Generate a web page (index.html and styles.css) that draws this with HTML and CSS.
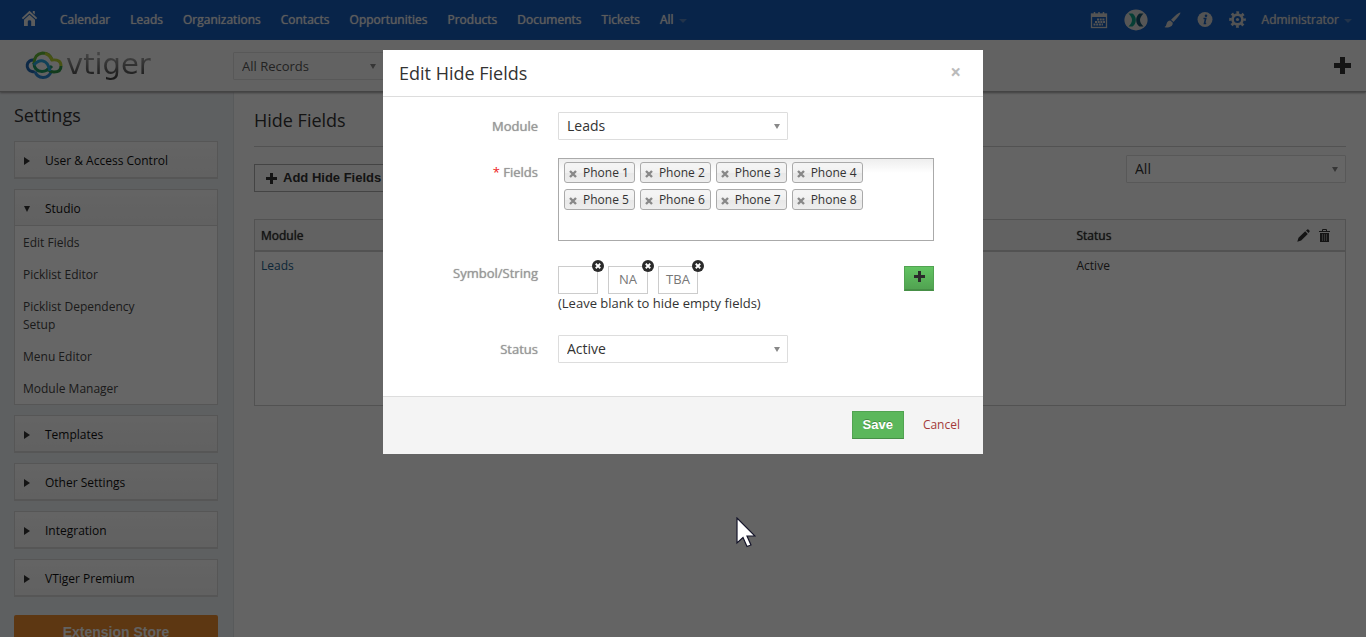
FILE: index.html
```html
<!DOCTYPE html>
<html lang="en">
<head>
    <meta charset="UTF-8">
    <meta name="viewport" content="width=device-width, initial-scale=1.0">
    <title>Hide Fields - Settings</title>
    <link rel="stylesheet" href="styles.css">
</head>
<body>
    <nav class="navbar">
        <a class="nav-home" href="#" aria-label="Home">
            <svg width="17" height="17" viewBox="0 0 17 17" fill="currentColor">
                <path d="M8.500 0.800L16.200 8L15 9.300L8.500 3.400L2 9.300L0.800 8Z"/>
                <path d="M8.500 4.800L14 9.800V16H10.200V11.500Q10.200 10.200 8.500 10.200T6.800 11.500V16H3V9.800Z"/>
                <path d="M11.800 1H13.800V4.500L11.800 2.700Z"/>
            </svg>
        </a>
        <div class="nav-links">
            <a href="#">Calendar</a>
            <a href="#">Leads</a>
            <a href="#">Organizations</a>
            <a href="#">Contacts</a>
            <a href="#">Opportunities</a>
            <a href="#">Products</a>
            <a href="#">Documents</a>
            <a href="#">Tickets</a>
            <a href="#">All<span class="caret"></span></a>
        </div>
        <div class="nav-tools">
            <a href="#" aria-label="Calendar">
                <svg width="18" height="18" viewBox="0 0 18 18">
                    <rect x="1.500" y="3" width="15" height="13.500" fill="none" stroke="currentColor" stroke-width="1.300"/>
                    <path d="M1 3H17V6H1Z" fill="currentColor"/>
                    <path d="M4.500 1V4.500M9 1V4.500M13.500 1V4.500" stroke="currentColor" stroke-width="1.500"/>
                    <path d="M7 8.500H15M5 11H15M3.500 13.500H13" stroke="currentColor" stroke-width="1.800" stroke-dasharray="2 .7"/>
                </svg>
            </a>
            <a href="#" aria-label="Exchange">
                <svg width="24" height="22" viewBox="0 0 24 22">
                    <ellipse cx="12" cy="11" rx="11.600" ry="10.400" fill="#d8d8d8"/>
                    <path d="M4.500 4.500H8.500Q11.800 7 11.800 11T8.500 17.500H4.500Q8 14 8 11T4.500 4.500Z" fill="#0d9b83"/>
                    <path d="M19.500 4.500H15.500Q12.200 7 12.200 11T15.500 17.500H19.500Q16 14 16 11T19.500 4.500Z" fill="#17536f"/>
                </svg>
            </a>
            <a href="#" aria-label="Theme">
                <svg width="17" height="17" viewBox="0 0 17 17" fill="currentColor">
                    <path d="M16.400 0.500Q16.700 1.500 13.500 5.500L9.500 10L7 7.800L11.200 3.800Q15.500 0.200 16.400 0.500Z"/>
                    <path d="M6.300 8.500L8.800 10.800Q8.800 14.500 5 15.200Q2 15.800 0.500 14.900Q2.300 14.300 2.600 11.800Q3.200 8.800 6.300 8.500Z"/>
                </svg>
            </a>
            <a href="#" aria-label="Info">
                <svg width="16" height="17" viewBox="0 0 16 17">
                    <circle cx="8" cy="7.500" r="7.500" fill="currentColor"/>
                    <circle cx="9" cy="3.700" r="1.300" fill="#145ab6"/>
                    <path d="M6.500 6.500H8.700L7.500 11.500H9.200" fill="none" stroke="#145ab6" stroke-width="1.600"/>
                </svg>
            </a>
            <a href="#" aria-label="Settings">
                <svg width="17" height="18" viewBox="0 0 17 18">
                    <g fill="none" stroke="currentColor">
                        <circle cx="8.500" cy="8.500" r="4.900" stroke-width="2.600"/>
                        <circle cx="8.500" cy="8.500" r="7" stroke-width="2.600" stroke-dasharray="2.700 2.798" stroke-dashoffset="1.350"/>
                    </g>
                    <circle cx="8.500" cy="8.500" r="1.600" fill="currentColor"/>
                </svg>
            </a>
            <a class="nav-user" href="#">Administrator<span class="caret"></span></a>
        </div>
    </nav>

    <header class="header">
        <a class="logo" href="#">
            <svg width="40" height="30" viewBox="0 0 40 30" fill="none" stroke-width="3">
                <path d="M11 9A5.800 5.800 0 1 0 9 20.500Q11 21 12 20.500" stroke="#2166b0"/>
                <path d="M12 20.500A8.500 8.500 0 0 0 28 21" stroke="#2b86cf"/>
                <path d="M11 13Q11 3 19.500 2Q27 2 29 9" stroke="#5fb336"/>
                <path d="M22 2.500Q27 4 29 9Q38 8 38 15" stroke="#b5cc34"/>
                <path d="M38 15Q38 21 31 21Q27 21 24 17" stroke="#2d9547"/>
                <path d="M11 12Q11 20 19 20.500Q24 20.500 29 15" stroke="#1f9a63"/>
                <path d="M11 14Q15 9 20 10Q25 11 27 20" stroke="#2aa4dc"/>
            </svg>
            <span class="logo-text">vtiger</span>
        </a>
        <div class="select filter-select">
            <select aria-label="Record filter">
                <option>All Records</option>
            </select>
        </div>
        <button class="quick-add" type="button" aria-label="Quick create">
            <svg width="17" height="17" viewBox="0 0 17 17"><path d="M8.500 0V17M0 8.500H17" stroke="currentColor" stroke-width="5"/></svg>
        </button>
    </header>

    <div class="page">
        <aside class="sidebar">
            <h2>Settings</h2>
            <section class="panel">
                <button class="panel-heading" type="button">User &amp; Access Control</button>
            </section>
            <section class="panel open">
                <button class="panel-heading" type="button">Studio</button>
                <ul class="panel-menu">
                    <li><a href="#">Edit Fields</a></li>
                    <li><a href="#">Picklist Editor</a></li>
                    <li><a href="#">Picklist Dependency Setup</a></li>
                    <li><a href="#">Menu Editor</a></li>
                    <li><a href="#">Module Manager</a></li>
                </ul>
            </section>
            <section class="panel">
                <button class="panel-heading" type="button">Templates</button>
            </section>
            <section class="panel">
                <button class="panel-heading" type="button">Other Settings</button>
            </section>
            <section class="panel">
                <button class="panel-heading" type="button">Integration</button>
            </section>
            <section class="panel">
                <button class="panel-heading" type="button">VTiger Premium</button>
            </section>
            <button class="extension-store" type="button">Extension Store</button>
        </aside>

        <main class="content">
            <h2>Hide Fields</h2>
            <div class="toolbar">
                <button class="add-button" type="button">
                    <svg width="11" height="11" viewBox="0 0 11 11"><path d="M5.500 0V11M0 5.500H11" stroke="currentColor" stroke-width="3"/></svg>
                    Add Hide Fields
                </button>
                <div class="select module-select">
                    <select aria-label="Module filter">
                        <option>All</option>
                    </select>
                </div>
            </div>
            <table class="list-table">
                <thead>
                    <tr>
                        <th class="col-module">Module</th>
                        <th></th>
                        <th class="col-status">Status</th>
                        <th class="col-actions">
                            <div class="row-actions">
                                <button type="button" aria-label="Edit">
                                    <svg width="13" height="13" viewBox="0 0 13 13" fill="currentColor"><path d="M0.300 12.700L1.500 8.800L8.200 2.300L10.800 4.900L4.200 11.500ZM9 1.500L10.300 0.400Q11 0 11.700 0.700L12.400 1.400Q13 2.100 12.500 2.800L11.500 4Z"/></svg>
                                </button>
                                <button type="button" aria-label="Delete">
                                    <svg width="11" height="13" viewBox="0 0 11 13"><path d="M3.500 2V0.500H7.500V2M0 2.500H11" fill="none" stroke="currentColor"/><path d="M1 4H10V13H1Z" fill="currentColor"/><path d="M3.500 5V12M5.500 5V12M7.500 5V12" stroke="#aaa" stroke-width=".7"/></svg>
                                </button>
                            </div>
                        </th>
                    </tr>
                </thead>
                <tbody>
                    <tr>
                        <td><a href="#">Leads</a></td>
                        <td></td>
                        <td>Active</td>
                        <td></td>
                    </tr>
                </tbody>
            </table>
        </main>
    </div>

    <div class="backdrop"></div>

    <div class="modal" role="dialog" aria-modal="true" aria-labelledby="modal-title">
        <form>
            <div class="modal-header">
                <h3 id="modal-title">Edit Hide Fields</h3>
                <button class="close" type="button" aria-label="Close">×</button>
            </div>
            <div class="modal-body">
                <div class="form-row">
                    <label for="module">Module</label>
                    <div class="select">
                        <select id="module">
                            <option>Leads</option>
                        </select>
                    </div>
                </div>
                <div class="form-row">
                    <span class="label" id="fields-label"><span class="required">*</span> Fields</span>
                    <ul class="tags" aria-labelledby="fields-label">
                        <li><button type="button" aria-label="Remove Phone 1"></button>Phone 1</li>
                        <li><button type="button" aria-label="Remove Phone 2"></button>Phone 2</li>
                        <li><button type="button" aria-label="Remove Phone 3"></button>Phone 3</li>
                        <li><button type="button" aria-label="Remove Phone 4"></button>Phone 4</li>
                        <li><button type="button" aria-label="Remove Phone 5"></button>Phone 5</li>
                        <li><button type="button" aria-label="Remove Phone 6"></button>Phone 6</li>
                        <li><button type="button" aria-label="Remove Phone 7"></button>Phone 7</li>
                        <li><button type="button" aria-label="Remove Phone 8"></button>Phone 8</li>
                    </ul>
                </div>
                <div class="form-row symbol-row">
                    <label for="symbol-1">Symbol/String</label>
                    <div>
                        <div class="symbols">
                            <div class="symbol">
                                <input id="symbol-1" type="text" value="">
                                <button type="button" aria-label="Remove blank"></button>
                            </div>
                            <div class="symbol">
                                <input type="text" value="NA" aria-label="Symbol 2">
                                <button type="button" aria-label="Remove NA"></button>
                            </div>
                            <div class="symbol">
                                <input type="text" value="TBA" aria-label="Symbol 3">
                                <button type="button" aria-label="Remove TBA"></button>
                            </div>
                            <button class="add-symbol" type="button" aria-label="Add symbol">
                                <svg width="11" height="11" viewBox="0 0 11 11"><path d="M5.500 0V11M0 5.500H11" stroke="currentColor" stroke-width="3"/></svg>
                            </button>
                        </div>
                        <p class="hint">(Leave blank to hide empty fields)</p>
                    </div>
                </div>
                <div class="form-row">
                    <label for="status">Status</label>
                    <div class="select">
                        <select id="status">
                            <option>Active</option>
                        </select>
                    </div>
                </div>
            </div>
            <div class="modal-footer">
                <button class="save" type="submit">Save</button>
                <a class="cancel" href="#">Cancel</a>
            </div>
        </form>
    </div>

    <svg class="cursor" width="20" height="32" viewBox="0 0 20 32">
        <path d="M1 1V26L7 20.500L11 29.500L15 28L11 19H19Z" fill="#fff" stroke="#15152a" stroke-width="1.200"/>
    </svg>

    <script>
        // the same small cross is used on the field tags and the symbol boxes
        const cross = '<svg width="8" height="8" viewBox="0 0 8 8"><path d="M1 1L7 7M7 1L1 7" stroke="currentColor" stroke-width="2.400"/></svg>';
        document.querySelectorAll('.tags button, .symbol button').forEach(button => {
            button.innerHTML = cross;
        });
    </script>
</body>
</html>
```
FILE: styles.css
```css
:root {
    --nav-color: #145ab6;
    --border-color: #ddd;
    --green: #5bb75b;
    --text: #333;
}

* {
    margin: 0;
    padding: 0;
    box-sizing: border-box;
}

body {
    height: 100vh;
    overflow: hidden;
    display: flex;
    flex-direction: column;
    font-family: "Open Sans", sans-serif;
    font-size: 12px;
    line-height: 18px;
    color: var(--text);
    background: #fafafa;
}

a {
    color: inherit;
    text-decoration: none;
}

button {
    border: none;
    background: none;
    font: inherit;
    color: inherit;
    cursor: pointer;
}

svg {
    display: block;
}

ul {
    list-style: none;
}

/* top bar */
.navbar {
    flex: none;
    display: flex;
    align-items: center;
    height: 40px;
    padding: 0 14px 0 21px;
    color: #e6e6e6;
    background: var(--nav-color);
    text-shadow: 0 0 1px currentColor;
}

.nav-home {
    padding-bottom: 4px;
}

.nav-links {
    display: flex;
    gap: 20px;
    margin-left: 22px;
}

.nav-tools {
    display: flex;
    align-items: center;
    gap: 16px;
    margin-left: auto;
    color: #d0d0d0;
}

.caret {
    display: inline-block;
    margin-left: 5px;
    vertical-align: middle;
    border: 4px solid transparent;
    border-top-color: #5580b8;
    border-bottom: none;
}

.header {
    position: relative;
    flex: none;
    display: flex;
    align-items: center;
    height: 52px;
    padding: 0 15px 0 23px;
    background: #f5f5f5;
    border-bottom: 1px solid #aaa;
    box-shadow: 0 1px 2px #999;
}

.logo {
    display: flex;
    align-items: center;
    gap: 3px;
    width: 210px;
}

.logo-text {
    padding-bottom: 4px;
    font-family: "DejaVu Sans", sans-serif;
    font-size: 29px;
    line-height: 36px;
    color: transparent;
    background: linear-gradient(#aaa 20%, #444 80%);
    background-clip: text;
}

.quick-add {
    margin-left: auto;
}

/* selects */
.select {
    position: relative;
    width: 230px;
}

.select::after {
    content: "";
    position: absolute;
    right: 8px;
    top: 12px;
    border: 3px solid transparent;
    border-top: 5px solid #888;
    border-bottom: none;
    pointer-events: none;
}

.select select {
    display: block;
    width: 100%;
    height: 28px;
    padding: 0 8px 2px;
    appearance: none;
    border: 1px solid var(--border-color);
    border-radius: 1px;
    background: #fff;
    color: var(--text);
    font: 14px "Open Sans", sans-serif;
}

.filter-select {
    width: 151px;
}

.filter-select select {
    padding-bottom: 0;
    background: #f5f5f5;
    color: #555;
    font-size: 13px;
}

.module-select {
    width: 220px;
}

.page {
    flex: 1;
    display: flex;
    min-height: 0;
}

h2 {
    font-size: 18px;
    font-weight: 400;
    line-height: 26px;
}

/* sidebar */
.sidebar {
    flex: none;
    width: 234px;
    padding: 10px 15px 0 14px;
    background: #eceff3;
    border-right: 1px solid #dde0e4;
}

.sidebar h2 {
    margin-bottom: 13px;
}

.panel {
    margin-bottom: 10px;
    border: 1px solid #d8d8d8;
    border-bottom-width: 2px;
    background: #fff;
}

.panel.open {
    border-bottom-width: 1px;
}

.panel-heading {
    display: flex;
    align-items: center;
    gap: 14px;
    width: 100%;
    height: 35px;
    padding: 3px 8px 0;
    color: #111;
    background: linear-gradient(#fafafa, #f2f2f2);
}

.panel-heading::before {
    content: "";
    border: 4px solid transparent;
    border-left: 6px solid #333;
    border-right-width: 0;
    margin: 0 1px;
}

.open .panel-heading {
    height: 36px;
    border-bottom: 1px solid #d8d8d8;
}

.open .panel-heading::before {
    border: 3px solid transparent;
    border-top: 6px solid #333;
    border-bottom-width: 0;
}

.panel-menu a {
    display: block;
    padding: 8px 60px 6px 8px;
    color: #444;
}

.extension-store {
    width: 100%;
    height: 34px;
    margin-top: 8px;
    border-radius: 2px;
    background: #e98a2d;
    color: #f5f5f5;
    font-family: "Liberation Sans", sans-serif;
    font-size: 14px;
    font-weight: bold;
}

/* list view */
.content {
    flex: 1;
    padding: 15px 20px 0;
}

.content h2 {
    padding-bottom: 13px;
    border-bottom: 1px solid #ccc;
}

.toolbar {
    display: flex;
    justify-content: space-between;
    align-items: flex-start;
    margin: 8px 0 27px;
}

.add-button {
    display: flex;
    align-items: center;
    gap: 6px;
    height: 28px;
    margin-top: 9px;
    padding: 0 11px;
    border: 1px solid #aaa;
    font-family: "Liberation Sans", sans-serif;
    font-size: 13px;
    font-weight: bold;
}

.list-table {
    width: 100%;
    border: 1px solid #ccc;
    border-collapse: collapse;
    table-layout: fixed;
    background: #fff;
}

.list-table th {
    height: 31px;
    padding: 2px 6px 0;
    border-bottom: 2px solid #ccc;
    background: #f5f5f5;
    text-align: left;
    font-weight: 400;
    text-shadow: 0 0 1px currentColor;
}

.list-table td {
    height: 155px;
    padding: 5px 6px;
    vertical-align: top;
}

.list-table a {
    color: #1f5f8c;
}

.col-module,
.col-status {
    width: 180px;
}

.list-table .col-actions {
    width: 95px;
    padding-right: 15px;
}

.row-actions {
    display: flex;
    justify-content: flex-end;
    gap: 9px;
}

/* modal */
.backdrop {
    position: fixed;
    inset: 0;
    background: rgba(0, 0, 0, 0.6);
}

.modal {
    position: fixed;
    top: 50px;
    left: 50%;
    width: 600px;
    max-width: 100%;
    margin-left: -300px;
    background: #fff;
}

.modal-header {
    display: flex;
    align-items: center;
    justify-content: space-between;
    height: 47px;
    padding: 0 22px 0 16px;
    border-bottom: 1px solid var(--border-color);
}

.modal-header h3 {
    font-size: 18px;
    font-weight: 400;
}

.close {
    padding-bottom: 2px;
    color: #bbb;
    font-size: 19px;
    font-weight: bold;
}

.modal-body {
    display: flex;
    flex-direction: column;
    gap: 18px;
    padding: 15px 49px 33px 0;
}

.form-row {
    display: grid;
    grid-template-columns: 155px 1fr;
    column-gap: 20px;
}

.form-row label,
.label {
    padding-top: 5px;
    text-align: right;
    color: #999;
    font-size: 13px;
    text-shadow: 0 0 1px currentColor;
}

.required {
    color: #e22;
    text-shadow: none;
}

.tags {
    display: flex;
    flex-wrap: wrap;
    align-content: flex-start;
    gap: 6px 5px;
    min-height: 83px;
    padding: 3px 60px 3px 5px;
    border: 1px solid #aaa;
    background: linear-gradient(#eee, #fff 14px);
}

.tags li {
    display: flex;
    align-items: center;
    gap: 6px;
    height: 21px;
    padding: 0 5px 0 4px;
    border: 1px solid #aaa;
    border-radius: 3px;
    background: linear-gradient(#f4f4f4 20%, #f0f0f0 50%, #e8e8e8 52%, #eee);
}

.tags button {
    padding-top: 2px;
    color: #888;
}

.symbol-row {
    margin-top: 7px;
    margin-bottom: 5px;
}

.symbol-row label {
    padding-top: 0;
    line-height: 14px;
}

.symbols {
    display: flex;
    gap: 10px;
}

.symbol {
    position: relative;
}

.symbol input {
    display: block;
    width: 40px;
    height: 28px;
    padding-bottom: 2px;
    border: 1px solid #ccc;
    background: #fff;
    color: #777;
    font: 13px "Open Sans", sans-serif;
    text-align: center;
}

.symbol button {
    position: absolute;
    top: -6px;
    right: -6px;
    padding: 3px;
    border-radius: 50%;
    background: #2b2b2b;
    color: #fff;
}

.symbol button svg {
    width: 6px;
    height: 6px;
}

.add-symbol {
    width: 30px;
    height: 25px;
    margin-left: auto;
    padding: 0 9px 4px;
    border: 1px solid #51a351;
    border-bottom: 2px solid #468f46;
    background: linear-gradient(#62c462, #51a351);
    color: #2b2b2b;
}

.hint {
    font-size: 13px;
}

.modal-footer {
    display: flex;
    align-items: center;
    justify-content: flex-end;
    gap: 19px;
    height: 58px;
    padding: 0 23px 1px;
    border-top: 1px solid var(--border-color);
    background: #f4f4f4;
}

.save {
    height: 28px;
    padding: 0 10px;
    border: 1px solid #51a351;
    border-bottom-color: #468f46;
    background: var(--green);
    color: #fff;
    font-family: "Liberation Sans", sans-serif;
    font-size: 13px;
    font-weight: bold;
    text-shadow: 0 -1px 0 rgba(0, 0, 0, 0.25);
}

.cancel {
    color: #a33a3a;
}

.cursor {
    position: fixed;
    top: 517px;
    left: 736px;
}
```
